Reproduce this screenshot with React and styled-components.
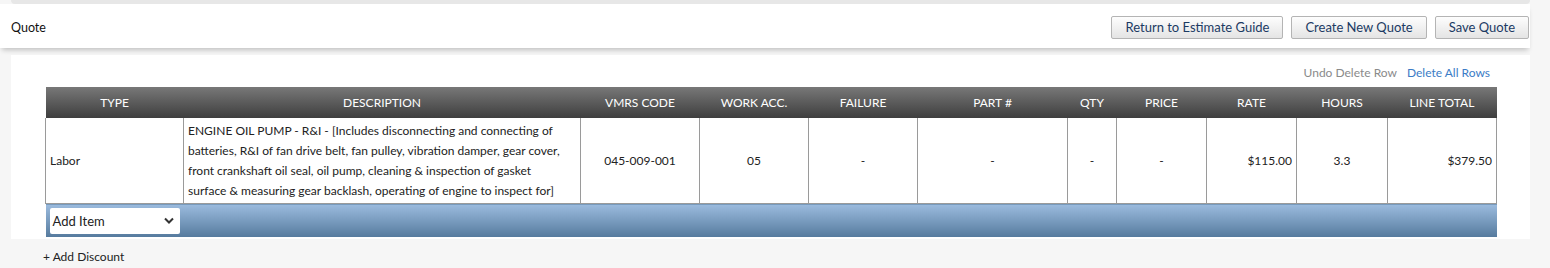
import React from "react";
import styled, { createGlobalStyle } from "styled-components";

const GlobalStyle = createGlobalStyle`
  body {
    margin: 0;
    background: #f6f6f6;
    font-family: Lato, "Liberation Sans", sans-serif;
    color: #222;
  }
`;

const Page = styled.div`
  width: 1550px;
  height: 268px;
  overflow: hidden;
`;

const TopStrip = styled.div`
  height: 4px;
  margin: 0 20px 0 11px;
  background: #e7e7e7;
  border-radius: 0 0 4px 4px;
`;

const HeaderBar = styled.div`
  display: flex;
  justify-content: space-between;
  align-items: center;
  width: 1530px;
  height: 44px;
  box-sizing: border-box;
  padding: 2px 1px 0 11px;
  background: #fff;
  box-shadow: 0 4px 5px -2px rgba(0, 0, 0, 0.22);
  position: relative;
  z-index: 1;
`;

const PageTitle = styled.div`
  font-size: 12.5px;
  font-weight: 400;
  color: #111;
`;

const ButtonGroup = styled.div`
  display: flex;
  gap: 8px;
`;

const Button = styled.button`
  height: 23px;
  padding: 0 13px;
  font-family: inherit;
  font-size: 13px;
  color: #1b3a63;
  background: linear-gradient(#fdfdfd, #e4e4e4);
  border: 1px solid #b4b4b4;
  border-radius: 2px;
  cursor: pointer;
`;

const ContentPanel = styled.div`
  width: 1519px;
  margin: 7px 0 0 11px;
  padding: 10px 0 0 34px;
  box-sizing: border-box;
  background: #fff;
`;

const LinkRow = styled.div`
  display: flex;
  justify-content: flex-end;
  gap: 10px;
  padding-right: 40px;
  height: 22px;
  font-size: 12px;
`;

const TextLink = styled.span`
  color: ${(p) => (p.muted ? "#8a8a8a" : "#3b7cc6")};
  cursor: pointer;
`;

const Table = styled.table`
  width: 1451px;
  table-layout: fixed;
  border-collapse: collapse;
  font-size: 12px;
`;

const HeadCell = styled.th`
  height: 31px;
  padding: 0;
  font-weight: 400;
  color: #fff;
  text-transform: uppercase;
  background: linear-gradient(#787878, #3e3e3e);
`;

const Cell = styled.td`
  height: 85px;
  padding: 0 4px;
  border: 1px solid #9a9a9a;
  border-top: none;
  text-align: ${(p) => p.align || "center"};
  line-height: 20px;
  color: #222;
`;

const FooterCell = styled.td`
  height: 33px;
  padding: 0 0 0 4px;
  border-top: 1px solid #9a9a9a;
  background: linear-gradient(#9bbbde, #557a9d);
`;

const SelectBox = styled.div`
  display: flex;
  align-items: center;
  justify-content: space-between;
  width: 130px;
  height: 26px;
  box-sizing: border-box;
  padding: 0 6px 0 3px;
  background: #fff;
  border-radius: 2px;
  font-size: 13px;
  color: #222;
`;

const AddDiscount = styled.div`
  margin: 10px 0 0 43px;
  font-size: 12px;
  color: #222;
`;

const columns = [
  { label: "Type", width: 138 },
  { label: "Description", width: 397 },
  { label: "VMRS Code", width: 119 },
  { label: "Work Acc.", width: 109 },
  { label: "Failure", width: 109 },
  { label: "Part #", width: 150 },
  { label: "Qty", width: 49 },
  { label: "Price", width: 90 },
  { label: "Rate", width: 90 },
  { label: "Hours", width: 91 },
  { label: "Line Total", width: 109 },
];

const Chevron = () => (
  <svg width="10" height="7" viewBox="0 0 10 7">
    <polyline points="1,1.5 5,5.5 9,1.5" fill="none" stroke="#333" strokeWidth="2" />
  </svg>
);

const App = () => {
  return (
    <Page>
      <GlobalStyle />
      <TopStrip />
      <HeaderBar>
        <PageTitle>Quote</PageTitle>
        <ButtonGroup>
          <Button>Return to Estimate Guide</Button>
          <Button>Create New Quote</Button>
          <Button>Save Quote</Button>
        </ButtonGroup>
      </HeaderBar>

      <ContentPanel>
        <LinkRow>
          <TextLink muted>Undo Delete Row</TextLink>
          <TextLink>Delete All Rows</TextLink>
        </LinkRow>
        <Table>
          <colgroup>
            {columns.map((c) => (
              <col key={c.label} style={{ width: c.width }} />
            ))}
          </colgroup>
          <thead>
            <tr>
              {columns.map((c) => (
                <HeadCell key={c.label}>{c.label}</HeadCell>
              ))}
            </tr>
          </thead>
          <tbody>
            <tr>
              <Cell align="left">Labor</Cell>
              <Cell align="left">
                ENGINE OIL PUMP - R&amp;I - [Includes disconnecting and connecting of
                <br />
                batteries, R&amp;I of fan drive belt, fan pulley, vibration damper, gear cover,
                <br />
                front crankshaft oil seal, oil pump, cleaning &amp; inspection of gasket
                <br />
                surface &amp; measuring gear backlash, operating of engine to inspect for]
              </Cell>
              <Cell>045-009-001</Cell>
              <Cell>05</Cell>
              <Cell>-</Cell>
              <Cell>-</Cell>
              <Cell>-</Cell>
              <Cell>-</Cell>
              <Cell align="right">$115.00</Cell>
              <Cell>3.3</Cell>
              <Cell align="right">$379.50</Cell>
            </tr>
            <tr>
              <FooterCell colSpan={columns.length}>
                <SelectBox>
                  Add Item
                  <Chevron />
                </SelectBox>
              </FooterCell>
            </tr>
          </tbody>
        </Table>
        <div style={{ height: 2 }} />
      </ContentPanel>
      <AddDiscount>+ Add Discount</AddDiscount>
    </Page>
  );
};

export default App;
